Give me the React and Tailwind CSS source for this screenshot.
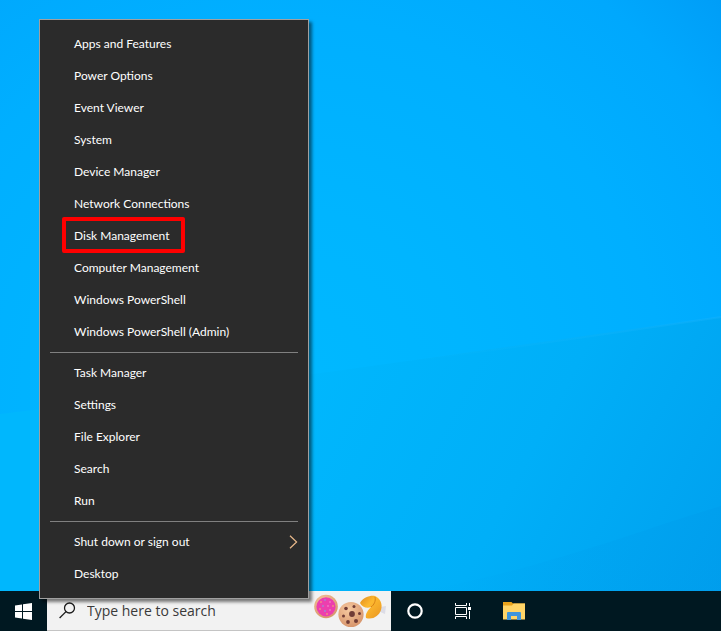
import React from 'react';

const groups = [
  [
    'Apps and Features',
    'Power Options',
    'Event Viewer',
    'System',
    'Device Manager',
    'Network Connections',
    'Disk Management',
    'Computer Management',
    'Windows PowerShell',
    'Windows PowerShell (Admin)',
  ],
  ['Task Manager', 'Settings', 'File Explorer', 'Search', 'Run'],
  ['Shut down or sign out', 'Desktop'],
];

function Wallpaper() {
  return (
    <svg className="absolute inset-0 w-full h-full" viewBox="0 0 721 631" preserveAspectRatio="none" aria-hidden="true">
      <defs>
        <radialGradient id="sky" gradientUnits="userSpaceOnUse" cx="280" cy="400" r="640">
          <stop offset="0" stopColor="#00b9ff" />
          <stop offset="0.3" stopColor="#00b5ff" />
          <stop offset="0.6" stopColor="#00afff" />
          <stop offset="0.8" stopColor="#00a8fd" />
          <stop offset="1" stopColor="#0098f4" />
        </radialGradient>
        <linearGradient id="beam" gradientUnits="userSpaceOnUse" x1="300" y1="380" x2="721" y2="600">
          <stop offset="0" stopColor="#00b7fd" />
          <stop offset="0.5" stopColor="#00aff8" />
          <stop offset="1" stopColor="#00a0ee" />
        </linearGradient>
        <linearGradient id="edge" x1="0" y1="0" x2="1" y2="0">
          <stop offset="0" stopColor="#1cbcff" stopOpacity="0" />
          <stop offset="1" stopColor="#1cb4ff" stopOpacity="0.35" />
        </linearGradient>
        <linearGradient id="shade" x1="0" y1="0" x2="1" y2="0">
          <stop offset="0" stopColor="#0096e8" stopOpacity="0" />
          <stop offset="1" stopColor="#0096e8" stopOpacity="0.25" />
        </linearGradient>
      </defs>
      <rect width="721" height="631" fill="url(#sky)" />
      <path d="M0 414 C 200 392 480 350 721 317 V631 H0 Z" fill="url(#beam)" />
      <path d="M400 362 C 500 350 620 332 721 317" fill="none" stroke="url(#edge)" strokeWidth="2" />
      <path d="M420 591 C 540 570 640 530 721 506 V591 Z" fill="url(#shade)" />
    </svg>
  );
}

function MenuItem({ label }) {
  return (
    <button type="button" role="menuitem" className="relative flex items-center justify-between w-full h-8 pl-[34px] pr-[10px] text-left hover:bg-[#414141]">
      <span>{label}</span>
      {label === 'Disk Management' && (
        <span className="absolute left-[22px] -top-[3px] w-[123px] h-9 border-4 border-[#ff0000] rounded-xs" />
      )}
      {label === 'Shut down or sign out' && (
        <svg width="9" height="14" viewBox="0 0 9 14" fill="none" stroke="#e8b88a" strokeWidth="1.2" aria-hidden="true">
          <path d="M1 0.8 L7.6 7 L1 13.2" />
        </svg>
      )}
    </button>
  );
}

function StartMenu() {
  return (
    <div role="menu" className="absolute left-[39px] bottom-8 w-[270px] py-2 bg-[#2b2b2b] border border-[#a0a0a0] text-white text-xs font-['Lato','Noto_Sans',sans-serif] shadow-[3px_3px_3px_rgba(0,0,0,0.5)]">
      {groups.map((items, i) => (
        <div key={i}>
          {i > 0 && <hr className="mx-[10px] my-1 border-[#808080]" />}
          {items.map((label) => (
            <MenuItem key={label} label={label} />
          ))}
        </div>
      ))}
    </div>
  );
}

function Cookies() {
  return (
    <svg width="77" height="40" viewBox="0 0 77 40" className="shrink-0" aria-hidden="true">
      <defs>
        <radialGradient id="dough" cx="0.4" cy="0.3" r="0.8">
          <stop offset="0" stopColor="#f6c9a0" />
          <stop offset="1" stopColor="#d48f66" />
        </radialGradient>
        <linearGradient id="fortune" x1="0" y1="0" x2="1" y2="1">
          <stop offset="0" stopColor="#e08a1c" />
          <stop offset="0.4" stopColor="#fdb92f" />
          <stop offset="1" stopColor="#e99520" />
        </linearGradient>
      </defs>
      <path d="M66 16 l6 -1 l-1 8 l-7 -3 Z" fill="#dcdce6" />
      <circle cx="12" cy="15.500" r="11.800" fill="url(#dough)" />
      <circle cx="12" cy="15.800" r="9.600" fill="#ec3fae" />
      {[[7, 11], [11, 9], [16, 11], [19, 15], [9, 15], [14, 15], [6, 18], [11, 20], [16, 19], [13, 23]].map(([x, y], i) => (
        <circle key={i} cx={x} cy={y} r="0.7" fill={['#ffd257', '#5fc4f5', '#f8a5dc'][i % 3]} />
      ))}
      <path d="M46 12 C49 6 57 4 61 5 C66 7 69 13 67 19 C65 25 59 29 52 27 C51 23 54 19 57 16 C53 18 48 16 46 12 Z" fill="url(#fortune)" />
      <path d="M57 16 C60 14 62 10 61 6" fill="none" stroke="#d98217" strokeWidth="1" />
      <circle cx="37" cy="23.500" r="12.600" fill="url(#dough)" />
      <g fill="#703c36">
        <circle cx="38" cy="23" r="2.900" />
        <circle cx="32" cy="17.500" r="1.800" />
        <circle cx="40" cy="15.500" r="1.500" />
        <circle cx="45.500" cy="22.500" r="1.500" />
        <circle cx="29.500" cy="25" r="1.500" />
        <circle cx="34" cy="31" r="1.900" />
        <circle cx="42" cy="30" r="2" />
      </g>
    </svg>
  );
}

function Taskbar() {
  return (
    <footer className="relative flex h-10 bg-[#001821]">
      <button type="button" aria-label="Start" className="flex items-center justify-center w-[47px]">
        <svg width="17" height="17" viewBox="0 0 17 17" fill="#fff" aria-hidden="true">
          <path d="M0 2.600 L7 1.500 V8 H0 Z M8 1.300 L17 0 V8 H8 Z M0 9 H7 V15.500 L0 14.500 Z M8 9 H17 V17 L8 15.700 Z" />
        </svg>
      </button>
      <label className="flex items-center w-[344px] pl-3 bg-[#f2f2f2] border-b border-[#c4c4c4]">
        <svg width="17" height="17" viewBox="0 0 17 17" fill="none" stroke="#1a1a1a" strokeWidth="1.300" aria-hidden="true">
          <circle cx="10.500" cy="6" r="5" />
          <path d="M7 9.600 L0.600 16" />
        </svg>
        <input type="text" aria-label="Search" placeholder="Type here to search" className="flex-1 min-w-0 ml-[11px] text-sm placeholder:text-[#3a3a3a] outline-none" />
        <Cookies />
      </label>
      <button type="button" aria-label="Cortana" className="flex items-center justify-center w-12">
        <svg width="16" height="16" viewBox="0 0 16 16" fill="none" aria-hidden="true">
          <circle cx="8" cy="8" r="6.700" stroke="#fff" strokeWidth="2.200" />
        </svg>
      </button>
      <button type="button" aria-label="Task View" className="flex items-center justify-center w-12">
        <svg width="17" height="16" viewBox="0 0 17 16" fill="none" stroke="#fff" aria-hidden="true">
          <path d="M0.500 0 V2.500 H11.500 V0 M0.500 16 V13.500 H11.500 V16 M0.500 4.500 H11.500 V11.500 H0.500 Z M14.500 0 V3 M14.500 8 V16" />
          <path d="M13 4 H16 V7 H13 Z" fill="#fff" stroke="none" />
        </svg>
      </button>
      <button type="button" aria-label="File Explorer" className="flex items-center justify-center w-[54px]">
        <svg width="22" height="18" viewBox="0 0 22 18" aria-hidden="true">
          <path d="M0 0 H8.500 L10 1.500 H22 V17 H0 Z" fill="#e9a21b" />
          <path d="M0 3.500 H9 L10.500 1.500 H22 V17.500 H0 Z" fill="#ffd467" />
          <path d="M4 18 V11 Q4 10 5 10 H17 Q18 10 18 11 V18 H14 V14 H8 V18 Z" fill="#3d94dc" />
        </svg>
      </button>
    </footer>
  );
}

export default function App() {
  return (
    <div className="relative flex flex-col min-h-screen overflow-hidden bg-[#00b0ff] font-['Open_Sans','Noto_Sans',sans-serif]">
      <Wallpaper />
      <main className="flex-1" />
      <Taskbar />
      <StartMenu />
    </div>
  );
}
